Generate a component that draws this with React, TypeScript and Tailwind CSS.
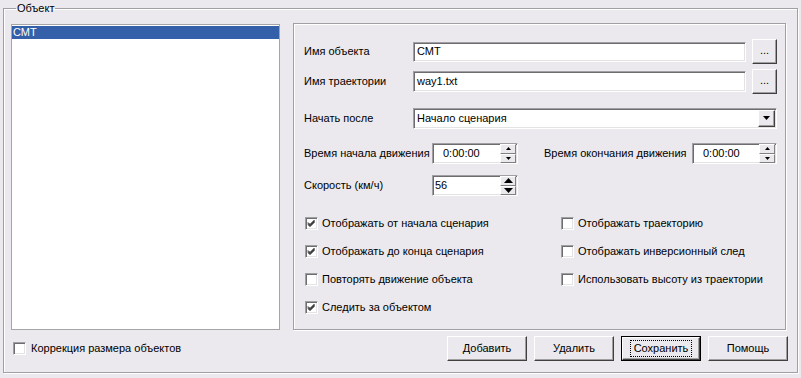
import React from 'react'

const sunken =
  'bg-white border border-t-[#a0a0a4] border-l-[#a0a0a4] border-r-white border-b-white shadow-[inset_1px_1px_0_#6d6d70,inset_-1px_-1px_0_#e3e3e3]'
const raised =
  'bg-[#ebe9ed] border border-t-white border-l-white border-r-[#404040] border-b-[#404040] shadow-[inset_-1px_-1px_0_#a0a0a0]'
const etched = 'border border-[#a0a0a4] shadow-[inset_1px_1px_0_#fff,1px_1px_0_#fff]'

function Check({ on }: { on?: boolean }) {
  return (
    <div className={`w-[13px] h-[13px] shrink-0 ${sunken}`}>
      {on && (
        <svg width="11" height="11" viewBox="0 0 11 11" className="block">
          <path d="M2 4.5 L4 6.5 L8.5 2 M2 5.5 L4 7.5 L8.5 3 M2 6.5 L4 8.5 L8.5 4" stroke="#000" strokeWidth="1" fill="none" />
        </svg>
      )}
    </div>
  )
}

function CheckRow({ on, label }: { on?: boolean; label: string }) {
  return (
    <div className="flex items-center h-[28px]">
      <Check on={on} />
      <span className="ml-[4px]">{label}</span>
    </div>
  )
}

function Arrow({ up, big }: { up?: boolean; big?: boolean }) {
  const w = big ? 9 : 5
  const h = big ? 5 : 3
  return (
    <svg width={w} height={h} viewBox={`0 0 ${w} ${h}`} className="block">
      <polygon points={up ? `0,${h} ${w},${h} ${w / 2},0` : `0,0 ${w},0 ${w / 2},${h}`} fill="#000" />
    </svg>
  )
}

function Spin({ value, big, w }: { value: string; big?: boolean; w: string }) {
  return (
    <div className={`${w} h-[21px] flex items-center ${sunken}`}>
      <span className={`flex-1 ${big ? 'pl-[2px]' : 'pl-[10px]'}`}>{value}</span>
      <div className="flex flex-col w-[16px] h-[19px] mr-[1px]">
        <div className={`flex-1 flex items-center justify-center ${big ? 'bg-[#ebe9ed] border border-t-white border-l-white border-r-[#808080] border-b-[#808080]' : 'bg-[#ebe9ed] border border-t-white border-l-white border-r-[#808080] border-b-[#808080]'}`}>
          <Arrow up big={big} />
        </div>
        <div className="flex-1 flex items-center justify-center bg-[#ebe9ed] border border-t-white border-l-white border-r-[#808080] border-b-[#808080]">
          <Arrow big={big} />
        </div>
      </div>
    </div>
  )
}

function Btn({ label, focused }: { label: string; focused?: boolean }) {
  if (focused) {
    return (
      <div className="w-[80px] h-[25px] border border-black">
        <div className={`w-full h-full flex items-center justify-center ${raised}`}>
          <div className="px-[3px] py-[1px] border border-dotted border-black leading-[13px]">{label}</div>
        </div>
      </div>
    )
  }
  return <div className={`w-[80px] h-[25px] flex items-center justify-center ${raised}`}>{label}</div>
}

export default function App() {
  return (
    <div className="w-[801px] h-[378px] bg-[#ebe9ed] pl-[3px] pt-[2px] text-black text-[11px] font-['Liberation_Sans',Arial,sans-serif] overflow-hidden">
      <fieldset className={`w-[795px] h-[371px] ${etched} px-[7px]`}>
        <legend className="ml-[5px] px-[1px] leading-[13px]">Объект</legend>

        <div className="flex mt-[8px]">
          <div className="w-[269px] h-[306px] mt-[1px] bg-white border border-[#a5a5a8]">
            <div className="h-[13px] mt-px bg-[#3360a8] text-white leading-[13px] pl-[1px]">СМТ</div>
          </div>

          <div className={`ml-[13px] w-[493px] h-[307px] ${etched} pl-[10px] pt-[15px]`}>
            <div className="flex items-center h-[25px]">
              <span className="w-[109px]">Имя объекта</span>
              <div className={`w-[333px] h-[20px] flex items-center pl-[3px] ${sunken}`}>СМТ</div>
              <div className={`ml-[6px] w-[25px] h-[25px] flex items-center justify-center pb-[3px] ${raised}`}>...</div>
            </div>
            <div className="flex items-center h-[25px] mt-[5px]">
              <span className="w-[109px]">Имя траектории</span>
              <div className={`w-[333px] h-[21px] flex items-center pl-[3px] ${sunken}`}>way1.txt</div>
              <div className={`ml-[6px] w-[25px] h-[25px] flex items-center justify-center pb-[3px] ${raised}`}>...</div>
            </div>
            <div className="flex items-center h-[22px] mt-[13px]">
              <span className="w-[109px]">Начать после</span>
              <div className={`w-[364px] h-[21px] flex items-center ${sunken}`}>
                <span className="flex-1 pl-[3px]">Начало сценария</span>
                <div className={`w-[17px] h-[17px] mr-[1px] flex items-center justify-center ${raised}`}>
                  <svg width="7" height="4" viewBox="0 0 7 4" className="block">
                    <polygon points="0,0 7,0 3.5,4" fill="#000" />
                  </svg>
                </div>
              </div>
            </div>
            <div className="flex items-center h-[21px] mt-[14px]">
              <span className="w-[128px]">Время начала движения</span>
              <Spin value="0:00:00" w="w-[86px]" />
              <span className="ml-[26px] w-[148px]">Время окончания движения</span>
              <Spin value="0:00:00" w="w-[85px]" />
            </div>
            <div className="flex items-center h-[21px] mt-[11px]">
              <span className="w-[128px]">Скорость (км/ч)</span>
              <Spin value="56" big w="w-[86px]" />
            </div>

            <div className="flex mt-[13px] pl-[1px]">
              <div className="w-[256px] flex flex-col">
                <CheckRow on label="Отображать от начала сценария" />
                <CheckRow on label="Отображать до конца сценария" />
                <CheckRow label="Повторять движение объекта" />
                <CheckRow on label="Следить за объектом" />
              </div>
              <div className="flex flex-col">
                <CheckRow label="Отображать траекторию" />
                <CheckRow label="Отображать инверсионный след" />
                <CheckRow label="Использовать высоту из траектории" />
              </div>
            </div>
          </div>
        </div>

        <div className="flex items-center mt-[6px]">
          <div className="flex items-center pl-[2px]">
            <Check />
            <span className="ml-[5px]">Коррекция размера объектов</span>
          </div>
          <div className="ml-auto mr-[2px] flex gap-[7px]">
            <Btn label="Добавить" />
            <Btn label="Удалить" />
            <Btn label="Сохранить" focused />
            <Btn label="Помощь" />
          </div>
        </div>
      </fieldset>
    </div>
  )
}
